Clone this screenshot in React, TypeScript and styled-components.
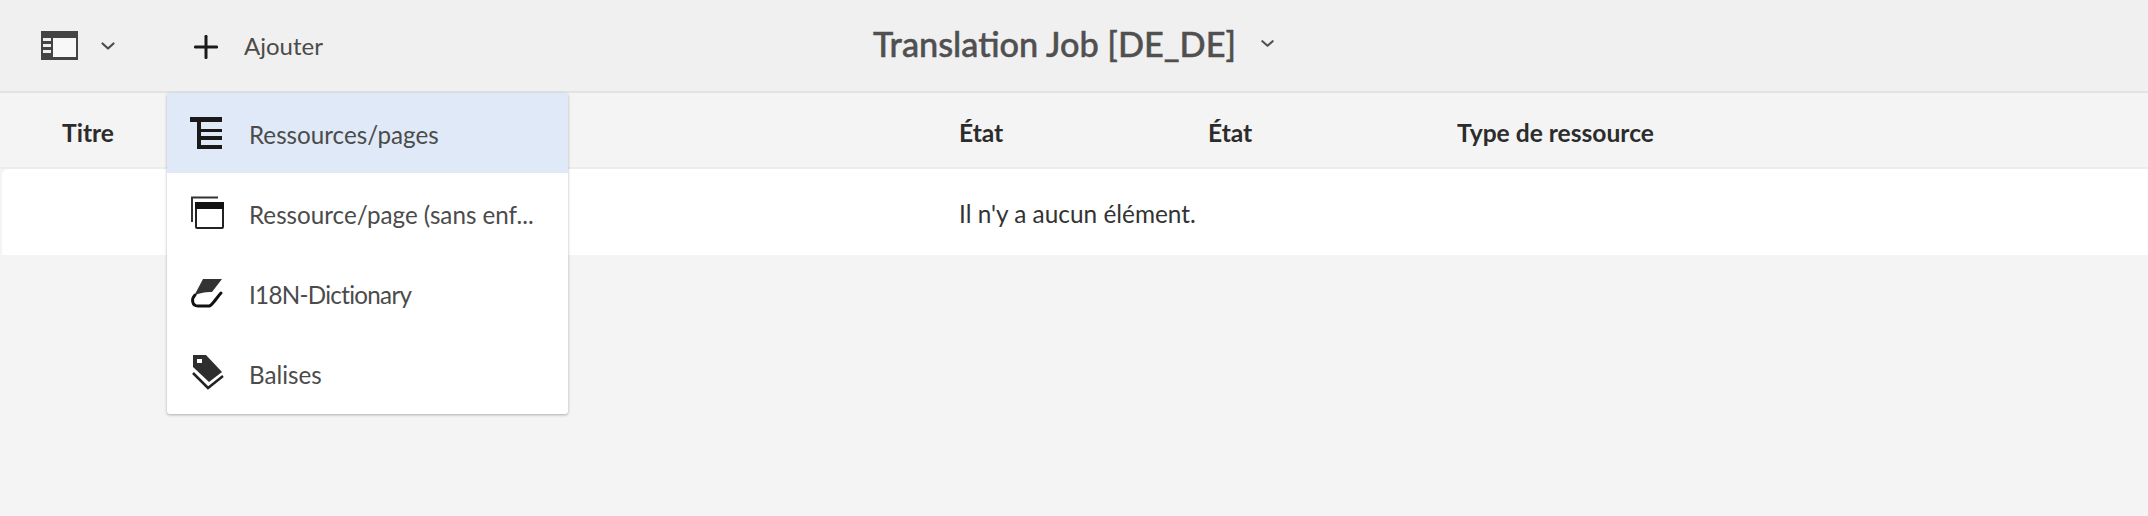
import React from "react";
import styled, { createGlobalStyle } from "styled-components";

const Global = createGlobalStyle`
  html, body { margin: 0; padding: 0; background: #f4f4f4; overflow: hidden; }
  body { font-family: Lato, "Open Sans", "Liberation Sans", sans-serif; }
`;
const Page = styled.div`
  position: relative; width: 2148px; height: 516px; background: #f4f4f4; overflow: hidden;
`;
const Toolbar = styled.header`
  display: grid; grid-template-columns: 1fr auto 1fr; align-items: center;
  height: 91px; background: #f0f0f0; border-bottom: 2px solid #e3e3e3; color: #4b4b4b;
`;
const ToolGroup = styled.div`
  display: flex; align-items: center; padding-left: 41px;
`;
const ToolButton = styled.div<{ $w: number }>`
  display: flex; align-items: center; width: ${(p) => p.$w}px; color: #4b4b4b;
`;
const PlusIcon = styled.svg`
  flex: none; margin-top: 2px;
`;
const AddLabel = styled.span`
  font-size: 24px; margin-left: 25px; color: #4b4b4b;
`;
const Title = styled.div`
  display: flex; align-items: center; gap: 24px; padding-bottom: 5px;
  font-size: 34.3px; font-weight: 500; color: #505050; white-space: nowrap;
  -webkit-text-stroke: 0.5px #505050;
`;
const HeaderRow = styled.div`
  display: grid; grid-template-columns: 897px 249px 249px auto; align-items: center;
  height: 69px; padding: 5px 0 0 62px; font-size: 24.6px; font-weight: 700; color: #2c2c2c;
  border-bottom: 2px solid #ececec; box-sizing: content-box;
`;
const Card = styled.div`
  display: grid; grid-template-columns: 957px auto; align-items: center;
  height: 84px; padding-top: 2px; background: #fff; border-radius: 6px 0 0 0;
  margin-left: 2px; font-size: 24.4px; color: #333;
`;
const Menu = styled.div`
  position: absolute; left: 167px; top: 93px; width: 401px; height: 321px;
  background: #fff; border-radius: 3px;
  box-shadow: 0 1px 3px rgba(0, 0, 0, 0.3);
  display: flex; flex-direction: column;
`;
const Item = styled.div<{ $active?: boolean }>`
  display: flex; align-items: center; height: 80px; flex: none;
  padding-left: 22px; gap: 20px; font-size: 24.2px; color: #4b4b4b; white-space: nowrap;
  background: ${(p) => (p.$active ? "#e0e9f7" : "transparent")};
`;
const ItemLabel = styled.span<{ $tight?: boolean }>`
  padding-top: 2px;
  letter-spacing: ${(p) => (p.$tight ? "-0.7px" : "0")};
`;
const Ico = styled.svg`
  width: 40px; height: 40px; flex: none; display: block; color: #1a1a1a;
`;

const Chevron = ({ size = 16 }: { size?: number }) => (
  <svg width={size} height={size} viewBox="0 0 16 16" fill="none" stroke="currentColor" strokeWidth="2.2" strokeLinecap="round" strokeLinejoin="round">
    <path d="M2.5 5.5 8 10.5 13.5 5.5" />
  </svg>
);

export default function App() {
  return (
    <Page>
      <Global />
      <Toolbar>
        <ToolGroup>
          <ToolButton $w={59}>
            <svg width="37" height="29" viewBox="0 0 37 29">
              <path fill="#444" fillRule="evenodd" d="M0 0h37v29H0zM12 7v19h23V7zM2 7v3h8V7zm0 6v3h8v-3zm0 6v3h8v-3z" />
              <rect x="12" y="7" width="23" height="19" fill="#f8f8f8" />
            </svg>
          </ToolButton>
          <ToolButton $w={93}><Chevron /></ToolButton>
          <PlusIcon width="26" height="26" viewBox="0 0 26 26" fill="#1a1a1a">
            <rect x="11.5" y="1" width="3" height="24" rx="1.2" />
            <rect x="1" y="11.5" width="24" height="3" rx="1.2" />
          </PlusIcon>
          <AddLabel>Ajouter</AddLabel>
        </ToolGroup>
        <Title>
          <span>Translation Job [DE_DE]</span>
          <Chevron size={15} />
        </Title>
        <div />
      </Toolbar>
      <HeaderRow>
        <span>Titre</span>
        <span>État</span>
        <span>État</span>
        <span>Type de ressource</span>
      </HeaderRow>
      <Card>
        <span />
        <span>Il n'y a aucun élément.</span>
      </Card>
      <Menu>
        <Item $active>
          <Ico viewBox="0 0 40 40">
            <path fill="currentColor" d="M1 4h32v5H12v7h21v3H12v4h21v4H12v5h21v4H8V9H1z" />
          </Ico>
          <ItemLabel>Ressources/pages</ItemLabel>
        </Item>
        <Item>
          <Ico viewBox="0 0 40 40" fill="none">
            <path stroke="#333" strokeWidth="2" d="M3 29V4.5h26" />
            <rect x="7" y="10" width="27" height="25" rx="1" fill="#fff" stroke="#222" strokeWidth="2" />
            <rect x="6" y="9" width="29" height="7" fill="#111" />
          </Ico>
          <ItemLabel>Ressource/page (sans enf...</ItemLabel>
        </Item>
        <Item>
          <Ico viewBox="0 0 40 40">
            <path fill="#333" d="M14 6h19L23 19c-8 0-13 1-18 4z" />
            <path fill="none" stroke="#111" strokeWidth="3" strokeLinecap="round" d="M6 22C2 26 3 33 9 33h11c3 0 8-9 12-13" />
          </Ico>
          <ItemLabel $tight>I18N-Dictionary</ItemLabel>
        </Item>
        <Item>
          <Ico viewBox="0 0 40 40">
            <path fill="#2e2e2e" fillRule="evenodd" d="M4 2h13l16 17-13 10L4 14zM8 6v4h5V6z" />
            <path fill="none" stroke="#222" strokeWidth="2.5" d="M4 20l15 15 15-12" />
          </Ico>
          <ItemLabel>Balises</ItemLabel>
        </Item>
      </Menu>
    </Page>
  );
}
